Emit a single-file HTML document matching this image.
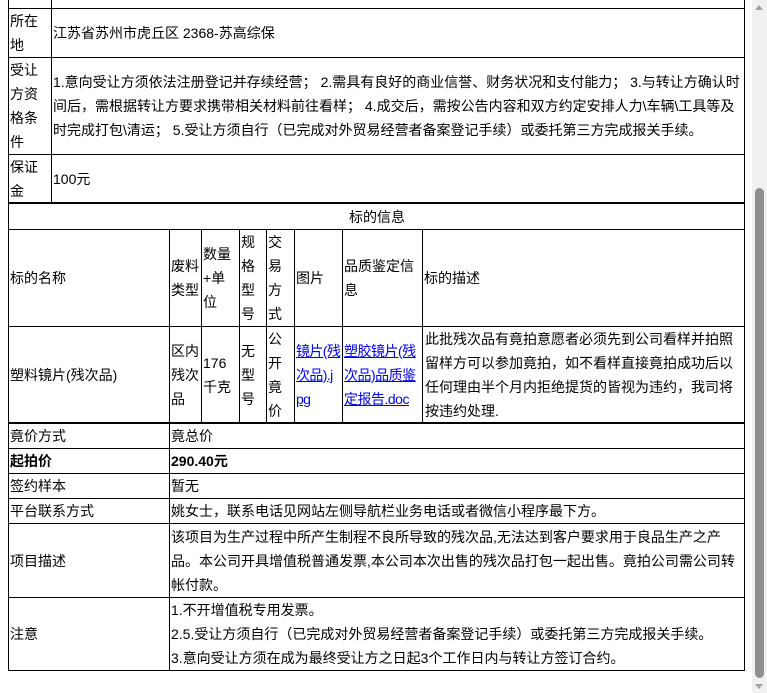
<!DOCTYPE html><html><head><meta charset="utf-8"><style>
body{margin:0;width:767px;height:693px;overflow:hidden;background:#fff;font:14px/24px "Liberation Sans","Noto Sans CJK SC",sans-serif;color:#000;position:relative}
.c{position:absolute;box-sizing:border-box;border:1px solid #000;padding:0 0 0 1px;display:flex;align-items:center;overflow:hidden}
.c span{display:block}
a{color:#00e;text-decoration:underline}
.hl{position:absolute;background:#000;height:2px;left:8px;width:737px}
</style></head><body>
<div class="c" style="left:8px;top:-10px;width:44px;height:19px"></div>
<div class="c" style="left:51px;top:-10px;width:694px;height:19px"></div>

<div class="c" style="left:8px;top:8px;width:44px;height:50px"><span>所在<br>地</span></div>
<div class="c" style="left:51px;top:8px;width:694px;height:50px"><span>江苏省苏州市虎丘区 2368-苏高综保</span></div>
<div class="c" style="left:8px;top:57px;width:44px;height:98px"><span>受让<br>方资<br>格条<br>件</span></div>
<div class="c" style="left:51px;top:57px;width:694px;height:98px"><span>1.意向受让方须依法注册登记并存续经营； 2.需具有良好的商业信誉、财务状况和支付能力； 3.与转让方确认时间后，需根据转让方要求携带相关材料前往看样； 4.成交后，需按公告内容和双方约定安排人力\车辆\工具等及时完成打包\清运； 5.受让方须自行（已完成对外贸易经营者备案登记手续）或委托第三方完成报关手续。</span></div>
<div class="c" style="left:8px;top:154px;width:44px;height:50px"><span>保证<br>金</span></div>
<div class="c" style="left:51px;top:154px;width:694px;height:50px"><span>100元</span></div>
<div class="hl" style="top:202px"></div>

<div class="c" style="left:8px;top:203px;width:737px;height:27px;justify-content:center"><span>标的信息</span></div>

<div class="c" style="left:8px;top:229px;width:162px;height:98px"><span>标的名称</span></div>
<div class="c" style="left:169px;top:229px;width:33px;height:98px"><span>废料<br>类型</span></div>
<div class="c" style="left:201px;top:229px;width:39px;height:98px"><span>数量<br>+单<br>位</span></div>
<div class="c" style="left:239px;top:229px;width:28px;height:98px"><span>规<br>格<br>型<br>号</span></div>
<div class="c" style="left:266px;top:229px;width:29px;height:98px"><span>交<br>易<br>方<br>式</span></div>
<div class="c" style="left:294px;top:229px;width:49px;height:98px"><span>图片</span></div>
<div class="c" style="left:342px;top:229px;width:81px;height:98px"><span>品质鉴定信<br>息</span></div>
<div class="c" style="left:422px;top:229px;width:323px;height:98px"><span>标的描述</span></div>

<div class="c" style="left:8px;top:326px;width:162px;height:98px"><span>塑料镜片(残次品)</span></div>
<div class="c" style="left:169px;top:326px;width:33px;height:98px"><span>区内<br>残次<br>品</span></div>
<div class="c" style="left:201px;top:326px;width:39px;height:98px"><span>176<br>千克</span></div>
<div class="c" style="left:239px;top:326px;width:28px;height:98px"><span>无<br>型<br>号</span></div>
<div class="c" style="left:266px;top:326px;width:29px;height:98px"><span>公<br>开<br>竟<br>价</span></div>
<div class="c" style="left:294px;top:326px;width:49px;height:98px;white-space:nowrap;letter-spacing:-0.6px"><span><a>镜片(残<br>次品).j<br>pg</a></span></div>
<div class="c" style="left:342px;top:326px;width:81px;height:98px;letter-spacing:-0.5px;white-space:nowrap"><span><a>塑胶镜片(残<br>次品)品质鉴<br>定报告.doc</a></span></div>
<div class="c" style="left:422px;top:326px;width:323px;height:98px;padding-left:2px"><span>此批残次品有竟拍意愿者必须先到公司看样并拍照留样方可以参加竟拍，如不看样直接竟拍成功后以任何理由半个月内拒绝提货的皆视为违约，我司将按违约处理.</span></div>
<div class="hl" style="top:422px"></div>

<div class="c" style="left:8px;top:423px;width:162px;height:26px"><span>竟价方式</span></div>
<div class="c" style="left:169px;top:423px;width:576px;height:26px"><span>竟总价</span></div>
<div class="c" style="left:8px;top:448px;width:162px;height:26px;font-weight:bold"><span>起拍价</span></div>
<div class="c" style="left:169px;top:448px;width:576px;height:26px;font-weight:bold"><span>290.40元</span></div>
<div class="c" style="left:8px;top:473px;width:162px;height:26px"><span>签约样本</span></div>
<div class="c" style="left:169px;top:473px;width:576px;height:26px"><span>暂无</span></div>
<div class="c" style="left:8px;top:498px;width:162px;height:26px"><span>平台联系方式</span></div>
<div class="c" style="left:169px;top:498px;width:576px;height:26px"><span>姚女士，联系电话见网站左侧导航栏业务电话或者微信小程序最下方。</span></div>
<div class="c" style="left:8px;top:523px;width:162px;height:75px"><span>项目描述</span></div>
<div class="c" style="left:169px;top:523px;width:576px;height:75px"><span>该项目为生产过程中所产生制程不良所导致的残次品,无法达到客户要求用于良品生产之产品。本公司开具增值税普通发票,本公司本次出售的残次品打包一起出售。竟拍公司需公司转帐付款。</span></div>
<div class="c" style="left:8px;top:597px;width:162px;height:74px"><span>注意</span></div>
<div class="c" style="left:169px;top:597px;width:576px;height:74px"><span>1.不开增值税专用发票。<br>2.5.受让方须自行（已完成对外贸易经营者备案登记手续）或委托第三方完成报关手续。<br>3.意向受让方须在成为最终受让方之日起3个工作日内与转让方签订合约。</span></div>

<div style="position:absolute;left:752px;top:0;width:15px;height:693px;background:#f1f1f1"></div>
<div style="position:absolute;left:755px;top:188px;width:9px;height:490px;background:#8f8f8f;border-radius:5px"></div>
<div style="position:absolute;left:755px;top:5px;width:0;height:0;border-left:4px solid transparent;border-right:4px solid transparent;border-bottom:5px solid #a3a3a3"></div>
<div style="position:absolute;left:755px;top:684px;width:0;height:0;border-left:4px solid transparent;border-right:4px solid transparent;border-top:5px solid #a3a3a3"></div>
</body></html>
